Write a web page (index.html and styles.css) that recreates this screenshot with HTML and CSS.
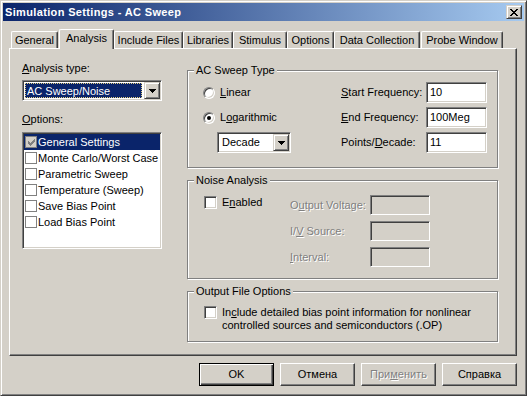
FILE: index.html
```html
<!DOCTYPE html>
<html lang="en">
<head>
    <meta charset="UTF-8">
    <title>Simulation Settings - AC Sweep</title>
    <link rel="stylesheet" href="styles.css">
</head>
<body>

<div class="window">
    <div class="titlebar">
        <span class="title">Simulation Settings - AC Sweep</span>
        <span class="close-btn">
            <svg width="8" height="7" viewBox="0 0 8 7" shape-rendering="crispEdges">
                <path d="M0 0h2v1h-2zM6 0h2v1h-2zM1 1h2v1h-2zM5 1h2v1h-2zM2 2h4v1h-4zM3 3h2v1h-2zM2 4h4v1h-4zM1 5h2v1h-2zM5 5h2v1h-2zM0 6h2v1h-2zM6 6h2v1h-2z" fill="#000"/>
            </svg>
        </span>
    </div>

    <div class="tabs">
        <div class="tab tab-general">General</div>
        <div class="tab tab-analysis active">Analysis</div>
        <div class="tab tab-include">Include Files</div>
        <div class="tab tab-libraries">Libraries</div>
        <div class="tab tab-stimulus">Stimulus</div>
        <div class="tab tab-options">Options</div>
        <div class="tab tab-data">Data Collection</div>
        <div class="tab tab-probe">Probe Window</div>
    </div>

    <div class="panel">
        <!-- left column: analysis type + options list -->
        <div class="left-col">
            <div class="label"><u>A</u>nalysis type:</div>
            <div class="combo analysis-combo">
                <div class="combo-value focused">AC Sweep/Noise</div>
                <div class="combo-btn">
                    <svg width="7" height="4" viewBox="0 0 7 4" shape-rendering="crispEdges"><path d="M0 0h7v1h-1v1h-1v1h-1v1h-1v-1h-1v-1h-1v-1h-1z" fill="#000"/></svg>
                </div>
            </div>

            <div class="label options-label"><u>O</u>ptions:</div>
            <div class="listbox">
                <div class="list-item selected">
                    <span class="flat-check checked">
                        <svg width="7" height="7" viewBox="0 0 7 7" shape-rendering="crispEdges"><path d="M6 0h1v3h-1zM5 1h1v3h-1zM4 2h1v3h-1zM0 2h1v3h-1zM1 3h1v3h-1zM3 3h1v3h-1zM2 4h1v3h-1z" fill="#808080"/></svg>
                    </span>General Settings
                </div>
                <div class="list-item"><span class="flat-check"></span>Monte Carlo/Worst Case</div>
                <div class="list-item"><span class="flat-check"></span>Parametric Sweep</div>
                <div class="list-item"><span class="flat-check"></span>Temperature (Sweep)</div>
                <div class="list-item"><span class="flat-check"></span>Save Bias Point</div>
                <div class="list-item"><span class="flat-check"></span>Load Bias Point</div>
            </div>
        </div>

        <!-- right column: group boxes -->
        <div class="right-col">
            <div class="group ac-group">
                <div class="legend">AC Sweep Type</div>
                <div class="ac-grid">
                    <div class="radio-row"><span class="radio"></span><span><u>L</u>inear</span></div>
                    <div class="field-label"><u>S</u>tart Frequency:</div>
                    <div class="textbox">10</div>

                    <div class="radio-row"><span class="radio checked"></span><span>L<u>o</u>garithmic</span></div>
                    <div class="field-label"><u>E</u>nd Frequency:</div>
                    <div class="textbox">100Meg</div>

                    <div class="combo decade-combo">
                        <div class="combo-value">Decade</div>
                        <div class="combo-btn">
                            <svg width="7" height="4" viewBox="0 0 7 4" shape-rendering="crispEdges"><path d="M0 0h7v1h-1v1h-1v1h-1v1h-1v-1h-1v-1h-1v-1h-1z" fill="#000"/></svg>
                        </div>
                    </div>
                    <div class="field-label">Points/<u>D</u>ecade:</div>
                    <div class="textbox">11</div>
                </div>
            </div>

            <div class="group noise-group">
                <div class="legend">Noise Analysis</div>
                <div class="noise-grid">
                    <div class="check-row"><span class="checkbox"></span><span>E<u>n</u>abled</span></div>
                    <div class="field-label disabled">O<u>u</u>tput Voltage:</div>
                    <div class="textbox disabled"></div>

                    <div></div>
                    <div class="field-label disabled">I/<u>V</u> Source:</div>
                    <div class="textbox disabled"></div>

                    <div></div>
                    <div class="field-label disabled"><u>I</u>nterval:</div>
                    <div class="textbox disabled"></div>
                </div>
            </div>

            <div class="group output-group">
                <div class="legend">Output File Options</div>
                <div class="output-body">
                    <span class="checkbox"></span>
                    <span>In<u>c</u>lude detailed bias point information for nonlinear<br>controlled sources and semiconductors (.OP)</span>
                </div>
            </div>
        </div>
    </div>

    <div class="buttons">
        <button class="btn default">OK</button>
        <button class="btn">Отмена</button>
        <button class="btn disabled">При<u>м</u>енить</button>
        <button class="btn">Справка</button>
    </div>
</div>

</body>
</html>
```

FILE: styles.css
```css
* {
    box-sizing: border-box;
}
body {
    margin: 0;
    background-color: #d4d0c8;
    font-family: "Liberation Sans", Arial, sans-serif;
    font-size: 11px;
    line-height: 13px;
    color: #000;
}
u {
    text-underline-offset: 1px;
}

/* window frame */
.window {
    width: 527px;
    height: 396px;
    padding: 2px;
    background-color: #d4d0c8;
    border: 1px solid;
    border-color: #d4d0c8 #404040 #404040 #d4d0c8;
    box-shadow: inset 1px 1px #fff, inset -1px -1px #808080;
}
.titlebar {
    height: 18px;
    display: flex;
    align-items: center;
    justify-content: space-between;
    padding: 0 2px 0 2px;
    background: linear-gradient(to right, #0a246a, #a6caf0);
    color: #fff;
    font-weight: bold;
}
.title {
    letter-spacing: 0.35px;
}
.close-btn {
    width: 16px;
    height: 14px;
    display: flex;
    align-items: center;
    justify-content: center;
    background-color: #d4d0c8;
    border: 1px solid;
    border-color: #d4d0c8 #404040 #404040 #d4d0c8;
    box-shadow: inset 1px 1px #fff, inset -1px -1px #808080;
}

/* tabs */
.tabs {
    display: flex;
    align-items: flex-end;
    height: 19px;
    margin-top: 8px;
    padding-left: 8px;
}
.tab {
    height: 17px;
    display: flex;
    align-items: center;
    justify-content: center;
    border-top: 1px solid #fff;
    border-left: 1px solid #fff;
    border-right: 1px solid #404040;
    border-radius: 2px 2px 0 0;
    box-shadow: inset -1px 0 #808080;
    white-space: nowrap;
}
.tab.active {
    height: 20px;
    margin-bottom: -1px;
    padding-bottom: 2px;
    background-color: #d4d0c8;
    position: relative;
    z-index: 1;
}
.tab-general { width: 47px; }
.tab-analysis { width: 55px; margin-left: 1px; }
.tab-include { width: 69px; }
.tab-libraries { width: 50px; }
.tab-stimulus { width: 54px; }
.tab-options { width: 47px; }
.tab-data { width: 86px; }
.tab-probe { width: 82px; margin-left: 1px; }

/* property page */
.panel {
    height: 308px;
    margin: 0 7px 0 6px;
    padding: 13px 0 0 12px;
    display: flex;
    gap: 25px;
    border: 1px solid;
    border-color: #fff #404040 #404040 #fff;
    box-shadow: inset -1px -1px #808080;
}
.left-col {
    width: 140px;
    display: flex;
    flex-direction: column;
}
.options-label {
    margin-top: 12px;
}

/* sunken controls */
.combo,
.textbox,
.listbox {
    border: 1px solid;
    border-color: #808080 #fff #fff #808080;
    box-shadow: inset 1px 1px #404040, inset -1px -1px #d4d0c8;
    background-color: #fff;
}
.combo {
    height: 21px;
    padding: 1px;
    display: flex;
}
.analysis-combo {
    margin-top: 5px;
}
.combo-value {
    flex: 1;
    padding: 2px 0 0 3px;
}
.combo-value.focused {
    margin: 1px 2px 1px 1px;
    padding: 1px 0 0 1px;
    background-color: #0a246a;
    color: #fff;
    border: 1px dotted #e0cc80;
}
.combo-btn {
    width: 16px;
    height: 17px;
    display: flex;
    align-items: center;
    justify-content: center;
    padding-top: 1px;
    background-color: #d4d0c8;
    border: 1px solid;
    border-color: #d4d0c8 #404040 #404040 #d4d0c8;
    box-shadow: inset 1px 1px #fff, inset -1px -1px #808080;
}
.listbox {
    height: 117px;
    margin-top: 6px;
    padding: 1px;
}
.list-item {
    height: 16px;
    display: flex;
    align-items: center;
    padding-left: 1px;
    gap: 1px;
    white-space: nowrap;
}
.list-item.selected {
    background-color: #0a246a;
    color: #fff;
}
.flat-check {
    width: 12px;
    height: 12px;
    border: 1px solid #808080;
    background-color: #fff;
    display: flex;
    align-items: center;
    justify-content: center;
}
.flat-check.checked {
    background-color: #d4d0c8;
}

/* group boxes */
.right-col {
    width: 311px;
    margin-top: 8px;
    display: flex;
    flex-direction: column;
}
.group {
    border: 1px solid #808080;
    box-shadow: inset 1px 1px #fff, 1px 1px #fff;
}
.group + .group {
    margin-top: 12px;
}
.legend {
    width: fit-content;
    height: 13px;
    margin: -7px 0 -6px 6px;
    padding: 0 2px;
    background-color: #d4d0c8;
}
.ac-grid {
    display: grid;
    grid-template-columns: 138px 85px 61px;
    grid-auto-rows: 21px;
    row-gap: 4px;
    padding: 11px 10px 14px 15px;
}
.noise-grid {
    display: grid;
    grid-template-columns: 86px 80px 60px;
    grid-auto-rows: 20px;
    row-gap: 6px;
    padding: 14px 0 11px 16px;
}
.output-body {
    display: flex;
    align-items: flex-start;
    gap: 5px;
    padding: 14px 0 9px 16px;
}
.radio-row,
.check-row {
    display: flex;
    align-items: center;
    gap: 5px;
}
.check-row {
    align-self: start;
    margin-top: 1px;
}
.radio {
    width: 12px;
    height: 12px;
    border-radius: 50%;
    border: 1px solid;
    border-color: #808080 #fff #fff #808080;
    box-shadow: inset 1px 1px #404040, inset -1px -1px #d4d0c8;
    background-color: #fff;
    display: flex;
    align-items: center;
    justify-content: center;
}
.radio.checked::after {
    content: "";
    width: 4px;
    height: 4px;
    border-radius: 50%;
    background-color: #000;
}
.checkbox {
    width: 13px;
    height: 13px;
    flex: none;
    border: 1px solid;
    border-color: #808080 #fff #fff #808080;
    box-shadow: inset 1px 1px #404040, inset -1px -1px #d4d0c8;
    background-color: #fff;
}
.decade-combo {
    width: 74px;
    margin-left: 14px;
}
.field-label {
    align-self: center;
    white-space: nowrap;
}
.textbox {
    padding: 3px 0 0 3px;
}
.disabled {
    color: #808080;
    text-shadow: 1px 1px #fff;
}
.textbox.disabled {
    background-color: #d4d0c8;
}

/* dialog buttons */
.buttons {
    display: flex;
    justify-content: flex-end;
    gap: 6px;
    margin-top: 7px;
    padding-right: 7px;
}
.btn {
    width: 75px;
    height: 23px;
    padding: 0;
    font: inherit;
    color: #000;
    background-color: #d4d0c8;
    border: 1px solid;
    border-color: #fff #404040 #404040 #fff;
    box-shadow: inset -1px -1px #808080;
}
.btn.default {
    border-color: #000;
    box-shadow: inset 1px 1px #fff, inset -1px -1px #404040, inset -2px -2px #808080;
}
.btn.disabled {
    color: #808080;
}
```
